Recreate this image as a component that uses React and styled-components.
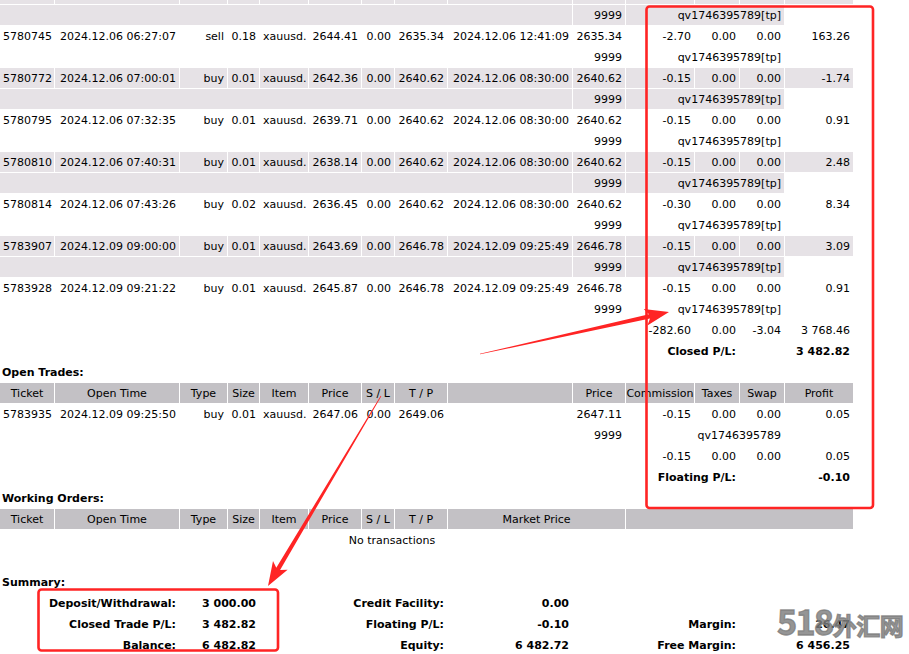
import React from "react";
import styled, { createGlobalStyle, css } from "styled-components";

const GlobalStyle = createGlobalStyle`
  html, body { margin: 0; padding: 0; background: #ffffff; }
  body { overflow: hidden; font-family: "DejaVu Sans", Verdana, sans-serif; color: #000; }
`;

const ROW_GRAY = "#e6e2e6";
const HEAD_GRAY = "#c3c1c5";
const RED = "#ff2424";

const Page = styled.div`
  position: relative;
  width: 909px;
  height: 654px;
  overflow: hidden;
`;

const Report = styled.div`
  display: flex;
  flex-direction: column;
  gap: 1px;
  width: 853px;
  margin-top: -16px;
`;

const Row = styled.div`
  display: grid;
  grid-template-columns: 54px 124px 47px 31px 48px 52px 32px 52px 124px 52px 68px 44px 44px 68px;
  column-gap: 1px;
  height: 20px;
`;

const Cell = styled.div`
  grid-column: span ${(p) => p.$span || 1};
  background: ${(p) => (p.$tone === "gray" ? ROW_GRAY : p.$tone === "head" ? HEAD_GRAY : "transparent")};
  text-align: ${(p) => p.$align || "right"};
  font-weight: ${(p) => (p.$bold ? 700 : 400)};
  font-size: 11px;
  line-height: 18px;
  padding: 2px 3px 0 3px;
  box-sizing: border-box;
  height: 20px;
  white-space: nowrap;
  overflow: visible;
  ${(p) =>
    p.$shift &&
    css`
      padding-right: ${p.$shift}px;
    `}
`;

const HeadCell = styled(Cell).attrs({ $tone: "head", $align: "center" })`
  padding-left: 0;
  padding-right: 0;
`;

const SectionTitle = styled(Cell).attrs({ $span: 14, $align: "left", $bold: true })`
  padding-left: 2px;
`;

const Overlay = styled.svg`
  position: absolute;
  left: 0;
  top: 0;
  width: 909px;
  height: 654px;
  pointer-events: none;
`;

const Watermark = styled.div`
  position: absolute;
  left: 777px;
  top: 604px;
  display: flex;
  align-items: baseline;
  color: rgba(125, 125, 125, 0.82);
  -webkit-text-stroke: 1.3px rgba(125, 125, 125, 0.82);
  font-family: "Noto Sans CJK SC", "Noto Sans", sans-serif;
  font-weight: 700;
  pointer-events: none;
  line-height: 1;
`;

const WmDigits = styled.span`
  font-size: 34px;
  letter-spacing: -1.5px;
`;

const WmHan = styled.span`
  font-size: 24px;
  letter-spacing: -0.5px;
`;

const trades = [
  ["5780745", "2024.12.06 06:27:07", "sell", "0.18", "2644.41", "0.00", "2635.34", "2024.12.06 12:41:09", "2635.34", "-2.70", "0.00", "0.00", "163.26"],
  ["5780772", "2024.12.06 07:00:01", "buy", "0.01", "2642.36", "0.00", "2640.62", "2024.12.06 08:30:00", "2640.62", "-0.15", "0.00", "0.00", "-1.74"],
  ["5780795", "2024.12.06 07:32:35", "buy", "0.01", "2639.71", "0.00", "2640.62", "2024.12.06 08:30:00", "2640.62", "-0.15", "0.00", "0.00", "0.91"],
  ["5780810", "2024.12.06 07:40:31", "buy", "0.01", "2638.14", "0.00", "2640.62", "2024.12.06 08:30:00", "2640.62", "-0.15", "0.00", "0.00", "2.48"],
  ["5780814", "2024.12.06 07:43:26", "buy", "0.02", "2636.45", "0.00", "2640.62", "2024.12.06 08:30:00", "2640.62", "-0.30", "0.00", "0.00", "8.34"],
  ["5783907", "2024.12.09 09:00:00", "buy", "0.01", "2643.69", "0.00", "2646.78", "2024.12.09 09:25:49", "2646.78", "-0.15", "0.00", "0.00", "3.09"],
  ["5783928", "2024.12.09 09:21:22", "buy", "0.01", "2645.87", "0.00", "2646.78", "2024.12.09 09:25:49", "2646.78", "-0.15", "0.00", "0.00", "0.91"],
];

function TradeRow({ d, tone }) {
  const [t, ot, type, size, price, sl, tp, ct, cp, comm, tax, swap, profit] = d;
  const cells = [t, ot, type, size, "xauusd.", price, sl, tp, ct, cp, comm, tax, swap, profit];
  return (
    <Row>
      {cells.map((c, i) => (
        <Cell key={i} $tone={tone}>
          {c}
        </Cell>
      ))}
    </Row>
  );
}

function CommentRow({ tone, comment }) {
  return (
    <Row>
      <Cell $span={9} $tone={tone} />
      <Cell $tone={tone}>9999</Cell>
      <Cell $span={3} $tone={tone}>
        {comment}
      </Cell>
    </Row>
  );
}

function EmptyGrayRow() {
  return (
    <Row>
      {Array.from({ length: 14 }).map((_, i) => (
        <Cell key={i} $tone="gray" />
      ))}
    </Row>
  );
}

const headers = ["Ticket", "Open Time", "Type", "Size", "Item", "Price", "S / L", "T / P"];

function arrowPoints(tail, tip, headLen, headHalf, shaftHalf, tailHalf) {
  const dx = tip[0] - tail[0];
  const dy = tip[1] - tail[1];
  const len = Math.hypot(dx, dy);
  const ux = dx / len;
  const uy = dy / len;
  const nx = -uy;
  const ny = ux;
  const bx = tip[0] - ux * headLen;
  const by = tip[1] - uy * headLen;
  const nbx = bx + ux * 4;
  const nby = by + uy * 4;
  const pts = [
    [tail[0] + nx * tailHalf, tail[1] + ny * tailHalf],
    [nbx + nx * shaftHalf, nby + ny * shaftHalf],
    [bx + nx * headHalf, by + ny * headHalf],
    tip,
    [bx - nx * headHalf, by - ny * headHalf],
    [nbx - nx * shaftHalf, nby - ny * shaftHalf],
    [tail[0] - nx * tailHalf, tail[1] - ny * tailHalf],
  ];
  return pts.map((p) => `${p[0].toFixed(1)},${p[1].toFixed(1)}`).join(" ");
}

export default function App() {
  return (
    <Page>
      <GlobalStyle />
      <Report>
        <EmptyGrayRow />
        <CommentRow tone="gray" comment="qv1746395789[tp]" />
        {trades.map((d, i) => {
          const tone = i % 2 === 1 ? "gray" : undefined;
          return (
            <React.Fragment key={d[0]}>
              <TradeRow d={d} tone={tone} />
              <CommentRow tone={tone} comment="qv1746395789[tp]" />
            </React.Fragment>
          );
        })}
        <Row>
          <Cell $span={10} />
          <Cell>-282.60</Cell>
          <Cell>0.00</Cell>
          <Cell>-3.04</Cell>
          <Cell>3 768.46</Cell>
        </Row>
        <Row>
          <Cell $span={10} />
          <Cell $span={2} $bold>
            Closed P/L:
          </Cell>
          <Cell />
          <Cell $bold>3 482.82</Cell>
        </Row>

        <Row>
          <SectionTitle>Open Trades:</SectionTitle>
        </Row>
        <Row>
          {headers.map((h) => (
            <HeadCell key={h}>{h}</HeadCell>
          ))}
          <HeadCell />
          <HeadCell>Price</HeadCell>
          <HeadCell>Commission</HeadCell>
          <HeadCell>Taxes</HeadCell>
          <HeadCell>Swap</HeadCell>
          <HeadCell>Profit</HeadCell>
        </Row>
        <Row>
          <Cell>5783935</Cell>
          <Cell>2024.12.09 09:25:50</Cell>
          <Cell>buy</Cell>
          <Cell>0.01</Cell>
          <Cell>xauusd.</Cell>
          <Cell>2647.06</Cell>
          <Cell>0.00</Cell>
          <Cell>2649.06</Cell>
          <Cell />
          <Cell>2647.11</Cell>
          <Cell>-0.15</Cell>
          <Cell>0.00</Cell>
          <Cell>0.00</Cell>
          <Cell>0.05</Cell>
        </Row>
        <CommentRow comment="qv1746395789" />
        <Row>
          <Cell $span={10} />
          <Cell>-0.15</Cell>
          <Cell>0.00</Cell>
          <Cell>0.00</Cell>
          <Cell>0.05</Cell>
        </Row>
        <Row>
          <Cell $span={10} />
          <Cell $span={2} $bold>
            Floating P/L:
          </Cell>
          <Cell />
          <Cell $bold>-0.10</Cell>
        </Row>

        <Row>
          <SectionTitle>Working Orders:</SectionTitle>
        </Row>
        <Row>
          {headers.map((h) => (
            <HeadCell key={h}>{h}</HeadCell>
          ))}
          <HeadCell $span={2}>Market Price</HeadCell>
          <HeadCell $span={4} />
        </Row>
        <Row>
          <Cell $span={14} $align="center" $shift={72}>
            No transactions
          </Cell>
        </Row>
        <Row />

        <Row>
          <SectionTitle>Summary:</SectionTitle>
        </Row>
        <Row>
          <Cell $span={2} $bold>Deposit/Withdrawal:</Cell>
          <Cell $span={2} $bold>3 000.00</Cell>
          <Cell $span={4} $bold>Credit Facility:</Cell>
          <Cell $bold>0.00</Cell>
          <Cell $span={5} />
        </Row>
        <Row>
          <Cell $span={2} $bold>Closed Trade P/L:</Cell>
          <Cell $span={2} $bold>3 482.82</Cell>
          <Cell $span={4} $bold>Floating P/L:</Cell>
          <Cell $bold>-0.10</Cell>
          <Cell $span={3} $bold>Margin:</Cell>
          <Cell $span={2} $bold>26.47</Cell>
        </Row>
        <Row>
          <Cell $span={2} $bold>Balance:</Cell>
          <Cell $span={2} $bold>6 482.82</Cell>
          <Cell $span={4} $bold>Equity:</Cell>
          <Cell $bold>6 482.72</Cell>
          <Cell $span={3} $bold>Free Margin:</Cell>
          <Cell $span={2} $bold>6 456.25</Cell>
        </Row>
      </Report>

      <Watermark>
        <WmDigits>518</WmDigits>
        <WmHan>外汇网</WmHan>
      </Watermark>

      <Overlay viewBox="0 0 909 654">
        <rect x="646.5" y="6.5" width="226.5" height="501.5" rx="3" fill="none" stroke={RED} strokeWidth="2.6" />
        <rect x="38.5" y="589.5" width="239.5" height="61" rx="3" fill="none" stroke={RED} strokeWidth="2.6" />
        <polygon points={arrowPoints([480, 354], [669, 312], 24, 8.5, 2.2, 0.3)} fill={RED} />
        <polygon points={arrowPoints([381, 396], [268, 586], 24, 8.5, 2.2, 0.3)} fill={RED} />
      </Overlay>
    </Page>
  );
}
